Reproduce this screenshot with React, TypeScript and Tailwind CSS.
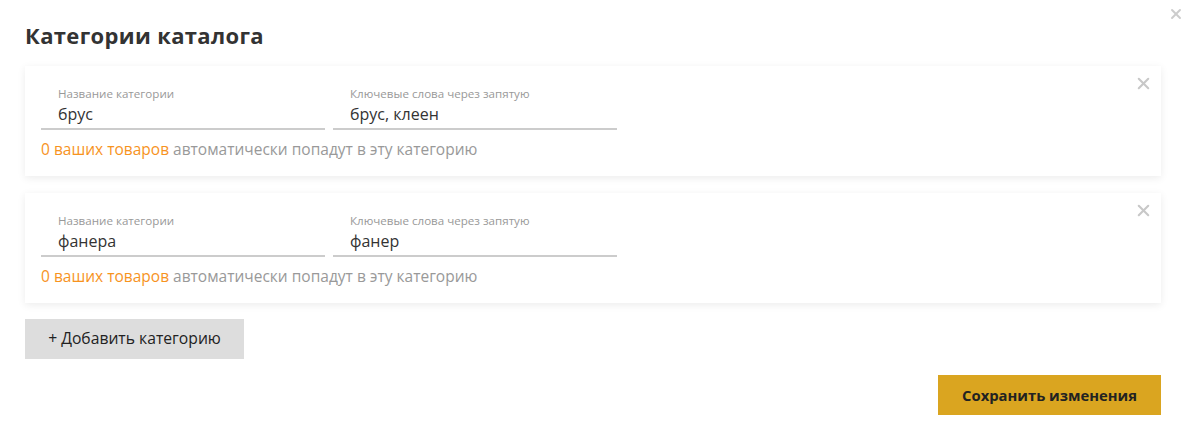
import { X } from 'lucide-react';

interface Category {
  name: string;
  keywords: string;
}

const categories: Category[] = [
  { name: 'брус', keywords: 'брус, клеен' },
  { name: 'фанера', keywords: 'фанер' },
];

function Field({ label, value }: { label: string; value: string }) {
  return (
    <div className="w-[284px] border-b-2 border-[#cccccc]">
      <div className="px-[17px] text-[11.6px] leading-[14px] text-[#999999]">{label}</div>
      <div className="px-[17px] text-[16px] leading-[23px] text-[#333333] pt-[2px] pb-[2px]">{value}</div>
    </div>
  );
}

function CategoryCard({ cat }: { cat: Category }) {
  return (
    <div className="relative bg-white h-[110px] pt-[21px] px-[16px] shadow-[0_2px_8px_rgba(0,0,0,0.08)]">
      <button className="absolute right-[8px] top-[8px] text-[#c8c8c8]">
        <X size={19} strokeWidth={2.6} />
      </button>
      <div className="flex gap-[8px]">
        <Field label="Название категории" value={cat.name} />
        <Field label="Ключевые слова через запятую" value={cat.keywords} />
      </div>
      <div className="mt-[9px] text-[15.5px] leading-[21px] text-[#999999]">
        <span className="text-[#f7931e]">0 ваших товаров</span> автоматически попадут в эту категорию
      </div>
    </div>
  );
}

export default function App() {
  return (
    <div
      className="relative w-[1188px] h-[433px] bg-white"
      style={{ fontFamily: '"Open Sans", "Noto Sans", sans-serif' }}
    >
      <button className="absolute right-[4px] top-[6px] text-[#cccccc]">
        <X size={16} strokeWidth={2.8} />
      </button>
      <div className="pl-[25px] pt-[20px] w-[1161px]">
        <h1 className="text-[22px] leading-[30px] font-bold text-[#333333] tracking-[0.35px]">
          Категории каталога
        </h1>
        <div className="mt-[16px] flex flex-col gap-[17px]">
          {categories.map((c) => (
            <CategoryCard key={c.name} cat={c} />
          ))}
        </div>
        <button className="mt-[16px] w-[219px] h-[40px] bg-[#dddddd] text-[15.7px] text-[#222222]">
          + Добавить категорию
        </button>
        <div className="mt-[16px] flex justify-end">
          <button className="w-[223px] h-[40px] bg-[#daa520] text-[14.8px] font-bold text-[#222222]">
            Сохранить изменения
          </button>
        </div>
      </div>
    </div>
  );
}
